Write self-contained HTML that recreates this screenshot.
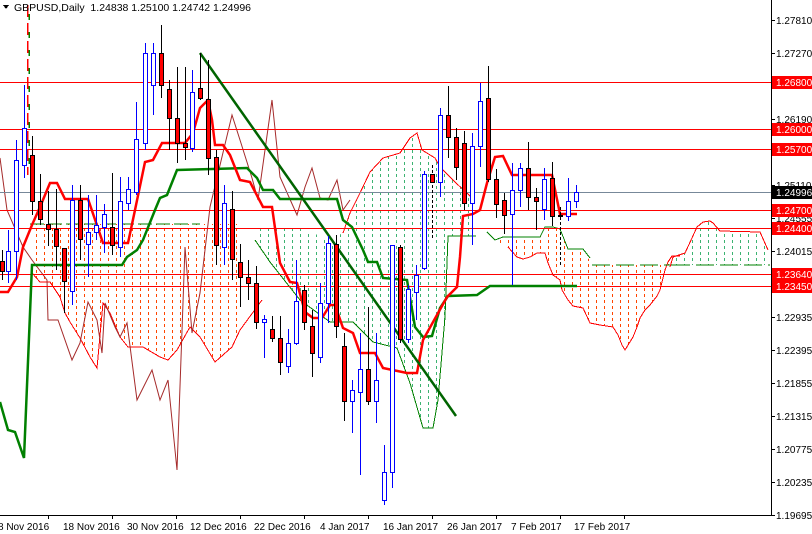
<!DOCTYPE html>
<html><head><meta charset="utf-8"><style>
html,body{margin:0;padding:0;background:#fff;width:812px;height:534px;overflow:hidden}
svg{display:block;font-family:"Liberation Sans",sans-serif}
</style></head><body>
<svg width="812" height="534" viewBox="0 0 812 534" xmlns="http://www.w3.org/2000/svg" shape-rendering="crispEdges">
<defs>
<pattern id="po" width="8" height="6" patternUnits="userSpaceOnUse"><line x1="4.5" y1="0" x2="4.5" y2="3" stroke="#ff4500" stroke-width="1"/></pattern>
<pattern id="pg" width="8" height="6" patternUnits="userSpaceOnUse"><line x1="4.5" y1="0" x2="4.5" y2="3" stroke="#3cb371" stroke-width="1"/></pattern>
</defs>
<rect width="812" height="534" fill="#fff"/>

<!-- clouds -->
<polygon fill="url(#po)" points="30,224 240,224 240,330 232,347 215,362 200,337 195,330 190,327 177,350 168,360 160,357 143,347 128,347 120,337 110,313 103,303 97,368 90,357 80,338 70,322 65,313 60,297 50,282 40,282 32,273"/>
<polyline fill="none" stroke="#ff0000" stroke-width="1" points="32,273 40,282 50,282 60,297 65,313 70,322 80,338 90,357 97,368 103,303 110,313 120,337 128,347 143,347 160,357 168,360 177,350 190,327 200,337 215,362 232,347 240,330 262,300"/>
<line x1="30" y1="224" x2="200" y2="224" stroke="#008000" stroke-dasharray="14,4"/>

<polygon fill="url(#pg)" points="255,228 300,228 330,240 343,233 350,213 360,193 370,172 383,158 400,153 410,138 417,133 422,150 435,158 440,167 455,182 470,196 476,236 448,236 445,317 438,400 433,428 423,428 410,383 397,348 373,342 353,322 330,322 300,300 270,262 255,240"/>
<polyline fill="none" stroke="#ff0000" stroke-width="1" points="343,233 350,213 360,193 370,172 383,158 400,153 410,138 417,133 422,150 435,158 440,167 455,182 470,196"/>
<polyline fill="none" stroke="#008000" stroke-width="1" points="476,236 448,236 445,317 438,400 433,428 423,428 410,383 397,348 373,342 353,322 330,322 300,300 270,262 255,240"/>

<polygon fill="url(#po)" points="487,232 495,240 503,237 540,237 545,227 553,227 560,229 568,249 583,249 592,265 670,265 668,262 672,256 665,270 660,290 657,296 650,305 645,310 640,318 637,327 633,337 625,350 622,345 618,335 613,327 600,325 590,323 583,308 573,306 568,300 562,290 560,280 553,275 548,263 545,253 537,253 530,257 523,259 517,257 508,247 495,240"/>
<polyline fill="none" stroke="#ff0000" stroke-width="1" points="508,247 517,257 523,259 530,257 537,253 545,253 548,263 553,275 560,280 562,290 568,300 573,306 583,308 590,323 600,325 613,327 618,335 622,345 625,350 633,337 637,327 640,318 645,310 650,305 657,296 660,290 665,270 668,262 672,256 680,256"/>
<polyline fill="none" stroke="#008000" stroke-width="1" points="487,232 495,240 503,237 540,237 545,227 553,227 560,229 568,249 583,249 590,258"/>
<line x1="592" y1="265" x2="680" y2="265" stroke="#008000" stroke-dasharray="18,6"/>

<polygon fill="url(#pg)" points="670,267 673,257 685,253 692,238 697,227 703,222 710,221 713,223 720,231 760,232 768,250 770,265 672,265"/>
<polyline fill="none" stroke="#ff0000" stroke-width="1" points="670,267 673,257 685,253 692,238 697,227 703,222 710,221 713,223 720,231 760,232 768,250"/>
<line x1="672" y1="265" x2="770" y2="265" stroke="#008000" stroke-dasharray="18,6"/>

<!-- chikou -->
<polyline fill="none" stroke="#a52a2a" stroke-width="1" shape-rendering="auto" points="0,158 7,210 23,247 32,260 47,280 48,320 58,320 72,360 80,343 88,302 97,320 102,353 105,303 115,327 120,337 127,323 137,400 152,370 160,400 168,380 177,470 185,247 192,333 200,293 210,207 232,115 240,140 252,178 258,200 272,100 280,177 297,215 305,187 312,168 320,198 328,200 337,180 343,210 350,200"/>

<!-- horizontal levels -->
<g stroke="#ff0000" stroke-width="1">
<line x1="0" y1="82.5" x2="771" y2="82.5"/>
<line x1="0" y1="129.5" x2="771" y2="129.5"/>
<line x1="0" y1="149.5" x2="771" y2="149.5"/>
<line x1="0" y1="210.5" x2="771" y2="210.5"/>
<line x1="0" y1="228.5" x2="771" y2="228.5"/>
<line x1="0" y1="274.5" x2="771" y2="274.5"/>
<line x1="0" y1="286.5" x2="771" y2="286.5"/>
</g>
<line x1="0" y1="192.5" x2="771" y2="192.5" stroke="#778899"/>

<!-- vertical dashed -->
<line x1="27.5" y1="5" x2="27.5" y2="175" stroke="#ff0000" stroke-width="1.5" stroke-dasharray="12,6"/>
<line x1="29" y1="14" x2="29" y2="175" stroke="#008000" stroke-width="1.5" stroke-dasharray="6,12"/>

<!-- kijun -->
<polyline fill="none" stroke="#008000" stroke-width="2.5" shape-rendering="auto" points="0,402 8,430 15,432 24,458 32,265 122,265 127,257 137,250 143,240 155,210 160,198 167,195 177,170 247,168 257,178 263,190 273,190 280,199 337,199 343,220 352,227 363,250 368,262 377,262 383,278 407,280 415,327 423,337 432,336 440,308 448,296 477,295 490,286 577,286"/>
<!-- tenkan -->
<polyline fill="none" stroke="#ff0000" stroke-width="2.5" shape-rendering="auto" points="0,292 8,292 17,277 23,247 32,225 40,207 50,183 57,183 65,199 88,199 103,243 128,243 135,210 145,162 153,160 162,143 185,143 193,133 200,108 208,100 212,120 215,145 223,145 230,155 240,180 250,182 263,207 272,207 280,263 290,282 297,283 305,312 313,318 322,318 330,305 335,305 343,328 353,333 360,353 375,353 383,368 407,373 417,373 423,340 447,297 457,287 460,257 463,216 473,214 480,210 487,183 495,157 503,156 512,175 552,175 560,214 577,214"/>
<!-- trendline -->
<line x1="200" y1="53" x2="456" y2="416" stroke="#006400" stroke-width="2.5" shape-rendering="auto"/>

<!-- candles -->
<g id="c" stroke-width="1">
<g stroke="#000"><line x1="2.5" y1="250" x2="2.5" y2="280"/><rect x="0.5" y="261.5" width="4" height="10" fill="#ff0000"/></g>
<g stroke="#0000ff"><line x1="8.5" y1="230" x2="8.5" y2="283"/><rect x="6.5" y="251.5" width="4" height="20" fill="#fff"/></g>
<g stroke="#0000ff"><line x1="16.5" y1="140" x2="16.5" y2="280"/><rect x="14.5" y="160.5" width="4" height="91" fill="#fff"/></g>
<g stroke="#0000ff"><line x1="24.5" y1="85" x2="24.5" y2="178"/><rect x="22.5" y="128.5" width="4" height="37" fill="#fff"/></g>
<g stroke="#000"><line x1="32.5" y1="136" x2="32.5" y2="215"/><rect x="30.5" y="155.5" width="4" height="46" fill="#ff0000"/></g>
<g stroke="#000"><line x1="40.5" y1="174" x2="40.5" y2="225"/><rect x="38.5" y="201.5" width="4" height="18" fill="#ff0000"/></g>
<g stroke="#000"><line x1="48.5" y1="191" x2="48.5" y2="246"/><rect x="46.5" y="224.5" width="4" height="5" fill="#ff0000"/></g>
<g stroke="#000"><line x1="56.5" y1="189" x2="56.5" y2="270"/><rect x="54.5" y="229.5" width="4" height="17" fill="#ff0000"/></g>
<g stroke="#000"><line x1="64.5" y1="248" x2="64.5" y2="313"/><rect x="62.5" y="248.5" width="4" height="33" fill="#ff0000"/></g>
<g stroke="#0000ff"><line x1="72.5" y1="185" x2="72.5" y2="305"/><rect x="70.5" y="200.5" width="4" height="91" fill="#fff"/></g>
<g stroke="#000"><line x1="80.5" y1="185" x2="80.5" y2="260"/><rect x="78.5" y="200.5" width="4" height="39" fill="#ff0000"/></g>
<g stroke="#0000ff"><line x1="88.5" y1="195" x2="88.5" y2="277"/><rect x="86.5" y="232.5" width="4" height="12" fill="#fff"/></g>
<g stroke="#0000ff"><line x1="96.5" y1="195" x2="96.5" y2="240"/><rect x="94.5" y="225.5" width="4" height="7" fill="#fff"/></g>
<g stroke="#0000ff"><line x1="104.5" y1="204" x2="104.5" y2="253"/><rect x="102.5" y="214.5" width="4" height="13" fill="#fff"/></g>
<g stroke="#000"><line x1="112.5" y1="173" x2="112.5" y2="255"/><rect x="110.5" y="227.5" width="4" height="18" fill="#ff0000"/></g>
<g stroke="#0000ff"><line x1="120.5" y1="177" x2="120.5" y2="257"/><rect x="118.5" y="201.5" width="4" height="46" fill="#fff"/></g>
<g stroke="#0000ff"><line x1="128.5" y1="177" x2="128.5" y2="210"/><rect x="126.5" y="189.5" width="4" height="14" fill="#fff"/></g>
<g stroke="#0000ff"><line x1="136.5" y1="102" x2="136.5" y2="195"/><rect x="134.5" y="139.5" width="4" height="53" fill="#fff"/></g>
<g stroke="#0000ff"><line x1="145.5" y1="43" x2="145.5" y2="150"/><rect x="143.5" y="53.5" width="4" height="90" fill="#fff"/></g>
<g stroke="#0000ff"><line x1="153.5" y1="43" x2="153.5" y2="115"/><rect x="151.5" y="53.5" width="4" height="32" fill="#fff"/></g>
<g stroke="#000"><line x1="161.5" y1="25" x2="161.5" y2="98"/><rect x="159.5" y="53.5" width="4" height="32" fill="#ff0000"/></g>
<g stroke="#000"><line x1="169.5" y1="80" x2="169.5" y2="150"/><rect x="167.5" y="89.5" width="4" height="29" fill="#ff0000"/></g>
<g stroke="#000"><line x1="177.5" y1="67" x2="177.5" y2="163"/><rect x="175.5" y="118.5" width="4" height="25" fill="#ff0000"/></g>
<g stroke="#000"><line x1="185.5" y1="67" x2="185.5" y2="160"/><rect x="183.5" y="143.5" width="4" height="4" fill="#ff0000"/></g>
<g stroke="#0000ff"><line x1="192.5" y1="70" x2="192.5" y2="152"/><rect x="190.5" y="92.5" width="4" height="56" fill="#fff"/></g>
<g stroke="#000"><line x1="200.5" y1="53" x2="200.5" y2="100"/><rect x="198.5" y="88.5" width="4" height="10" fill="#ff0000"/></g>
<g stroke="#000"><line x1="208.5" y1="60" x2="208.5" y2="175"/><rect x="206.5" y="99.5" width="4" height="59" fill="#ff0000"/></g>
<g stroke="#000"><line x1="216.5" y1="150" x2="216.5" y2="265"/><rect x="214.5" y="157.5" width="4" height="88" fill="#ff0000"/></g>
<g stroke="#0000ff"><line x1="224.5" y1="185" x2="224.5" y2="265"/><rect x="222.5" y="203.5" width="4" height="44" fill="#fff"/></g>
<g stroke="#000"><line x1="232.5" y1="191" x2="232.5" y2="280"/><rect x="230.5" y="209.5" width="4" height="50" fill="#ff0000"/></g>
<g stroke="#000"><line x1="240.5" y1="244" x2="240.5" y2="307"/><rect x="238.5" y="262.5" width="4" height="15" fill="#ff0000"/></g>
<g stroke="#000"><line x1="248.5" y1="260" x2="248.5" y2="300"/><rect x="246.5" y="277.5" width="4" height="6" fill="#ff0000"/></g>
<g stroke="#000"><line x1="256.5" y1="266" x2="256.5" y2="329"/><rect x="254.5" y="283.5" width="4" height="39" fill="#ff0000"/></g>
<g stroke="#0000ff"><line x1="264.5" y1="315" x2="264.5" y2="358"/><rect x="262.5" y="319.5" width="4" height="3" fill="#fff"/></g>
<g stroke="#000"><line x1="272.5" y1="316" x2="272.5" y2="342"/><rect x="270.5" y="329.5" width="4" height="9" fill="#ff0000"/></g>
<g stroke="#000"><line x1="280.5" y1="316" x2="280.5" y2="375"/><rect x="278.5" y="338.5" width="4" height="24" fill="#ff0000"/></g>
<g stroke="#0000ff"><line x1="288.5" y1="329" x2="288.5" y2="373"/><rect x="286.5" y="343.5" width="4" height="23" fill="#fff"/></g>
<g stroke="#0000ff"><line x1="296.5" y1="260" x2="296.5" y2="345"/><rect x="294.5" y="301.5" width="4" height="42" fill="#fff"/></g>
<g stroke="#000"><line x1="304.5" y1="285" x2="304.5" y2="330"/><rect x="302.5" y="290.5" width="4" height="32" fill="#ff0000"/></g>
<g stroke="#000"><line x1="312.5" y1="310" x2="312.5" y2="377"/><rect x="310.5" y="326.5" width="4" height="27" fill="#ff0000"/></g>
<g stroke="#0000ff"><line x1="320.5" y1="283" x2="320.5" y2="363"/><rect x="318.5" y="303.5" width="4" height="54" fill="#fff"/></g>
<g stroke="#0000ff"><line x1="328.5" y1="236" x2="328.5" y2="323"/><rect x="326.5" y="243.5" width="4" height="60" fill="#fff"/></g>
<g stroke="#000"><line x1="336.5" y1="235" x2="336.5" y2="338"/><rect x="334.5" y="244.5" width="4" height="82" fill="#ff0000"/></g>
<g stroke="#000"><line x1="344.5" y1="333" x2="344.5" y2="421"/><rect x="342.5" y="346.5" width="4" height="55" fill="#ff0000"/></g>
<g stroke="#0000ff"><line x1="352.5" y1="380" x2="352.5" y2="433"/><rect x="350.5" y="390.5" width="4" height="11" fill="#fff"/></g>
<g stroke="#0000ff"><line x1="360.5" y1="333" x2="360.5" y2="475"/><rect x="358.5" y="369.5" width="4" height="23" fill="#fff"/></g>
<g stroke="#000"><line x1="368.5" y1="307" x2="368.5" y2="405"/><rect x="366.5" y="369.5" width="4" height="32" fill="#ff0000"/></g>
<g stroke="#0000ff"><line x1="376.5" y1="333" x2="376.5" y2="423"/><rect x="374.5" y="380.5" width="4" height="21" fill="#fff"/></g>
<g stroke="#0000ff"><line x1="384.5" y1="445" x2="384.5" y2="505"/><rect x="382.5" y="472.5" width="4" height="28" fill="#fff"/></g>
<g stroke="#0000ff"><line x1="392.5" y1="245" x2="392.5" y2="488"/><rect x="390.5" y="245.5" width="4" height="227" fill="#fff"/></g>
<g stroke="#000"><line x1="400.5" y1="245" x2="400.5" y2="343"/><rect x="398.5" y="247.5" width="4" height="92" fill="#ff0000"/></g>
<g stroke="#0000ff"><line x1="408.5" y1="285" x2="408.5" y2="343"/><rect x="406.5" y="289.5" width="4" height="50" fill="#fff"/></g>
<g stroke="#0000ff"><line x1="416.5" y1="265" x2="416.5" y2="320"/><rect x="414.5" y="275.5" width="4" height="17" fill="#fff"/></g>
<g stroke="#0000ff"><line x1="424.5" y1="171" x2="424.5" y2="270"/><rect x="422.5" y="174.5" width="4" height="94" fill="#fff"/></g>
<g stroke="#000"><line x1="432.5" y1="165" x2="432.5" y2="240" stroke-dasharray="3,2"/><rect x="430.5" y="174.5" width="4" height="8" fill="#ff0000"/></g>
<g stroke="#0000ff"><line x1="440.5" y1="108" x2="440.5" y2="197"/><rect x="438.5" y="115.5" width="4" height="67" fill="#fff"/></g>
<g stroke="#000"><line x1="448.5" y1="86" x2="448.5" y2="158"/><rect x="446.5" y="115.5" width="4" height="22" fill="#ff0000"/></g>
<g stroke="#000"><line x1="456.5" y1="128" x2="456.5" y2="180"/><rect x="454.5" y="137.5" width="4" height="30" fill="#ff0000"/></g>
<g stroke="#000"><line x1="464.5" y1="131" x2="464.5" y2="210"/><rect x="462.5" y="143.5" width="4" height="60" fill="#ff0000"/></g>
<g stroke="#0000ff"><line x1="472.5" y1="133" x2="472.5" y2="245"/><rect x="470.5" y="146.5" width="4" height="57" fill="#fff"/></g>
<g stroke="#0000ff"><line x1="480.5" y1="83" x2="480.5" y2="167"/><rect x="478.5" y="101.5" width="4" height="45" fill="#fff"/></g>
<g stroke="#000"><line x1="488.5" y1="66" x2="488.5" y2="182"/><rect x="486.5" y="98.5" width="4" height="81" fill="#ff0000"/></g>
<g stroke="#000"><line x1="496.5" y1="169" x2="496.5" y2="218"/><rect x="494.5" y="179.5" width="4" height="25" fill="#ff0000"/></g>
<g stroke="#000"><line x1="504.5" y1="193" x2="504.5" y2="234"/><rect x="502.5" y="200.5" width="4" height="15" fill="#ff0000"/></g>
<g stroke="#0000ff"><line x1="512.5" y1="163" x2="512.5" y2="285"/><rect x="510.5" y="190.5" width="4" height="24" fill="#fff"/></g>
<g stroke="#0000ff"><line x1="520.5" y1="163" x2="520.5" y2="207"/><rect x="518.5" y="168.5" width="4" height="22" fill="#fff"/></g>
<g stroke="#000"><line x1="528.5" y1="142" x2="528.5" y2="210"/><rect x="526.5" y="168.5" width="4" height="29" fill="#ff0000"/></g>
<g stroke="#000"><line x1="536.5" y1="188" x2="536.5" y2="230"/><rect x="534.5" y="197.5" width="4" height="4" fill="#ff0000"/></g>
<g stroke="#0000ff"><line x1="544.5" y1="168" x2="544.5" y2="220"/><rect x="542.5" y="179.5" width="4" height="30" fill="#fff"/></g>
<g stroke="#000"><line x1="552.5" y1="162" x2="552.5" y2="226"/><rect x="550.5" y="178.5" width="4" height="38" fill="#ff0000"/></g>
<g stroke="#000"><line x1="560.5" y1="207" x2="560.5" y2="265" stroke-dasharray="3,2"/><rect x="558.5" y="215.5" width="4" height="1" fill="#ff0000"/></g>
<g stroke="#0000ff"><line x1="568.5" y1="178" x2="568.5" y2="221"/><rect x="566.5" y="201.5" width="4" height="15" fill="#fff"/></g>
<g stroke="#0000ff"><line x1="576.5" y1="185" x2="576.5" y2="208"/><rect x="574.5" y="192.5" width="4" height="9" fill="#fff"/></g>
</g>

<!-- axes -->
<line x1="771.5" y1="0" x2="771.5" y2="515" stroke="#000"/>
<line x1="0" y1="515.5" x2="772" y2="515.5" stroke="#000"/>
<g stroke="#000">
<line x1="771" y1="20.5" x2="775" y2="20.5"/><line x1="771" y1="53.5" x2="775" y2="53.5"/><line x1="771" y1="86.5" x2="775" y2="86.5"/><line x1="771" y1="119.5" x2="775" y2="119.5"/><line x1="771" y1="152.5" x2="775" y2="152.5"/><line x1="771" y1="185.5" x2="775" y2="185.5"/><line x1="771" y1="218.5" x2="775" y2="218.5"/><line x1="771" y1="251.5" x2="775" y2="251.5"/><line x1="771" y1="284.5" x2="775" y2="284.5"/><line x1="771" y1="317.5" x2="775" y2="317.5"/><line x1="771" y1="350.5" x2="775" y2="350.5"/><line x1="771" y1="383.5" x2="775" y2="383.5"/><line x1="771" y1="416.5" x2="775" y2="416.5"/><line x1="771" y1="449.5" x2="775" y2="449.5"/><line x1="771" y1="482.5" x2="775" y2="482.5"/><line x1="771" y1="515.5" x2="775" y2="515.5"/>
<line x1="48.5" y1="515" x2="48.5" y2="519"/><line x1="112.5" y1="515" x2="112.5" y2="519"/><line x1="176.5" y1="515" x2="176.5" y2="519"/><line x1="240.5" y1="515" x2="240.5" y2="519"/><line x1="304.5" y1="515" x2="304.5" y2="519"/><line x1="368.5" y1="515" x2="368.5" y2="519"/><line x1="432.5" y1="515" x2="432.5" y2="519"/><line x1="496.5" y1="515" x2="496.5" y2="519"/><line x1="560.5" y1="515" x2="560.5" y2="519"/><line x1="624.5" y1="515" x2="624.5" y2="519"/>
</g>
<g font-size="10" fill="#000" shape-rendering="auto">
<text x="776" y="24">1.27810</text><text x="776" y="57">1.27270</text><text x="776" y="123">1.26190</text><text x="776" y="189">1.25110</text><text x="776" y="222">1.24555</text><text x="776" y="255">1.24015</text><text x="776" y="321">1.22935</text><text x="776" y="354">1.22395</text><text x="776" y="387">1.21855</text><text x="776" y="420">1.21315</text><text x="776" y="453">1.20775</text><text x="776" y="486">1.20235</text><text x="776" y="519">1.19695</text>
<text x="-2" y="530">8 Nov 2016</text><text x="63" y="530">18 Nov 2016</text><text x="127" y="530">30 Nov 2016</text><text x="190" y="530">12 Dec 2016</text><text x="254" y="530">22 Dec 2016</text><text x="320" y="530">4 Jan 2017</text><text x="383" y="530">16 Jan 2017</text><text x="447" y="530">26 Jan 2017</text><text x="511" y="530">7 Feb 2017</text><text x="574" y="530">17 Feb 2017</text>
</g>
<g font-size="10" shape-rendering="auto">
<rect x="772" y="76" width="40" height="13" fill="#ff0000"/><text x="776" y="86" fill="#fff">1.26800</text>
<rect x="772" y="123" width="40" height="13" fill="#ff0000"/><text x="776" y="133" fill="#fff">1.26000</text>
<rect x="772" y="143" width="40" height="13" fill="#ff0000"/><text x="776" y="153" fill="#fff">1.25700</text>
<rect x="772" y="186" width="40" height="13" fill="#000"/><text x="776" y="196" fill="#fff">1.24996</text>
<rect x="772" y="204" width="40" height="13" fill="#ff0000"/><text x="776" y="214" fill="#fff">1.24700</text>
<rect x="772" y="222" width="40" height="13" fill="#ff0000"/><text x="776" y="232" fill="#fff">1.24400</text>
<rect x="772" y="268" width="40" height="13" fill="#ff0000"/><text x="776" y="278" fill="#fff">1.23640</text>
<rect x="772" y="280" width="40" height="13" fill="#ff0000"/><text x="776" y="290" fill="#fff">1.23450</text>
</g>
<polygon points="3,5 9,5 6,9" fill="#000"/>
<text x="14" y="11" font-size="10.5" fill="#000" shape-rendering="auto">GBPUSD,Daily&#160; 1.24838 1.25100 1.24742 1.24996</text>
</svg>
</body></html>
